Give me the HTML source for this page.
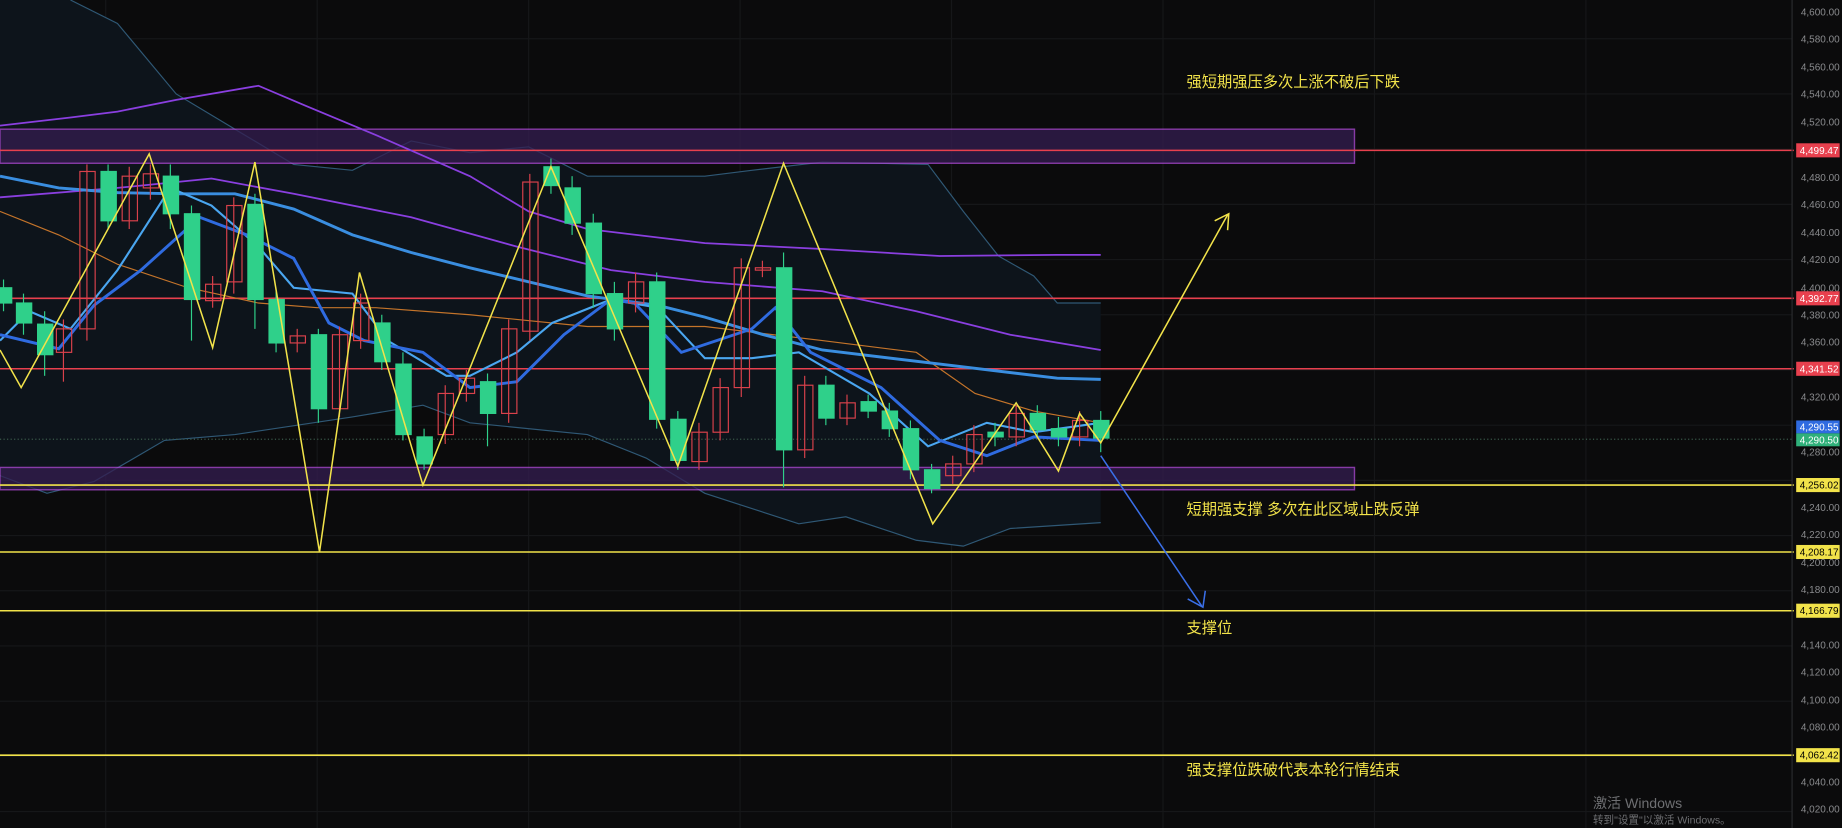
<!DOCTYPE html>
<html><head><meta charset="utf-8"><style>
html,body{margin:0;padding:0;background:#0b0b0c;overflow:hidden}
svg{display:block}
text{font-family:"Liberation Sans","Noto Sans CJK SC",sans-serif}
</style></head><body>
<svg width="1842" height="828" viewBox="0 0 1568 705" preserveAspectRatio="none" xmlns="http://www.w3.org/2000/svg">
<rect width="1568" height="705" fill="#0b0b0c"/>
<g stroke="#161719" stroke-width="1">
<line x1="90" y1="0" x2="90" y2="705"/><line x1="270" y1="0" x2="270" y2="705"/><line x1="450" y1="0" x2="450" y2="705"/><line x1="630" y1="0" x2="630" y2="705"/><line x1="810" y1="0" x2="810" y2="705"/><line x1="990" y1="0" x2="990" y2="705"/><line x1="1170" y1="0" x2="1170" y2="705"/><line x1="1350" y1="0" x2="1350" y2="705"/>
<line x1="0" y1="33" x2="1525" y2="33"/><line x1="0" y1="80" x2="1525" y2="80"/><line x1="0" y1="127" x2="1525" y2="127"/><line x1="0" y1="174" x2="1525" y2="174"/><line x1="0" y1="221" x2="1525" y2="221"/><line x1="0" y1="268" x2="1525" y2="268"/><line x1="0" y1="315" x2="1525" y2="315"/><line x1="0" y1="362" x2="1525" y2="362"/><line x1="0" y1="409" x2="1525" y2="409"/><line x1="0" y1="456" x2="1525" y2="456"/><line x1="0" y1="503" x2="1525" y2="503"/><line x1="0" y1="550" x2="1525" y2="550"/><line x1="0" y1="597" x2="1525" y2="597"/><line x1="0" y1="644" x2="1525" y2="644"/><line x1="0" y1="691" x2="1525" y2="691"/>
</g>
<polygon fill="#0d141b" points="0,0 60,0 100,20 150,80 200,110 250,140 300,145 350,120 400,130 450,125 480,140 500,150 600,150 640,145 700,138 790,140 820,180 850,218 880,235 900,258 937,258 937,445 860,450 820,465 780,460 720,440 680,446 600,420 550,390 500,370 400,360 360,345 300,355 200,370 140,375 80,410 40,420 0,405"/>
<polyline fill="none" stroke="#2f5875" stroke-width="1" points="60,0 100,20 150,80 200,110 250,140 300,145 350,120 400,130 450,125 480,140 500,150 600,150 640,145 700,138 790,140 820,180 850,218 880,235 900,258 937,258"/>
<polyline fill="none" stroke="#2f5875" stroke-width="1" points="0,405 40,420 80,410 140,375 200,370 300,355 360,345 400,360 500,370 550,390 600,420 680,446 720,440 780,460 820,465 860,450 937,445"/>
<rect x="0" y="110" width="1153" height="29" fill="#341d50" opacity="0.75" stroke="#b04ad8" stroke-width="1.2"/>
<rect x="0" y="398" width="1153" height="19" fill="#341d50" opacity="0.75" stroke="#b04ad8" stroke-width="1.2"/>
<g stroke-width="1.3">
<line x1="0" y1="128" x2="1527" y2="128" stroke="#e8404e"/>
<line x1="0" y1="254" x2="1527" y2="254" stroke="#e8404e"/>
<line x1="0" y1="314" x2="1527" y2="314" stroke="#e8404e"/>
<line x1="0" y1="413" x2="1527" y2="413" stroke="#f2e34a"/>
<line x1="0" y1="470" x2="1527" y2="470" stroke="#f2e34a"/>
<line x1="0" y1="520" x2="1527" y2="520" stroke="#f2e34a"/>
<line x1="0" y1="643" x2="1527" y2="643" stroke="#f2e34a"/>
</g>
<line x1="0" y1="374" x2="1525" y2="374" stroke="#3a5a4a" stroke-dasharray="1,2"/>
<polyline fill="none" stroke="#8a3fe0" stroke-width="1.5" points="0,107 60,100 100,95 150,85 220,73 260,90 320,115 400,150 450,180 500,195 600,207 700,212 800,218 900,217 937,217"/>
<polyline fill="none" stroke="#8a3fe0" stroke-width="1.5" points="0,168 100,160 180,152 250,165 350,185 440,210 520,230 600,240 700,248 780,265 860,285 937,298"/>
<polyline fill="none" stroke="#c4742a" stroke-width="1" points="0,180 50,200 100,225 160,245 220,258 270,262 320,262 400,268 500,278 600,278 700,290 780,300 830,335 880,350 937,360"/>
<polyline fill="none" stroke="#3a8ee0" stroke-width="2.5" points="0,150 50,160 100,164 150,165 200,165 250,178 300,200 350,215 400,228 500,252 560,260 600,270 650,285 700,298 800,310 900,322 937,323"/>
<polyline fill="none" stroke="#4aa6f0" stroke-width="1.8" points="0,290 25,265 60,280 100,230 145,160 180,175 220,210 250,245 300,250 330,290 380,320 400,320 440,300 470,275 520,255 560,262 600,305 640,305 680,300 740,335 790,380 840,360 880,368 937,360"/>
<polyline fill="none" stroke="#2f6be0" stroke-width="2.5" points="0,285 50,297 80,260 120,230 170,185 210,200 250,220 280,275 310,290 360,300 400,330 440,325 480,285 520,255 540,258 580,300 640,280 660,262 690,300 750,330 800,375 840,388 880,372 937,375"/>
<g stroke-width="1">
<g stroke="#2fd08a" fill="#2fd08a">
<line x1="3" y1="238" x2="3" y2="265"/><rect x="-3" y="245" width="13" height="13"/>
<line x1="20" y1="250" x2="20" y2="285"/><rect x="14" y="258" width="13" height="17"/>
<line x1="38" y1="265" x2="38" y2="320"/><rect x="32" y="276" width="13" height="26"/>
<line x1="92" y1="140" x2="92" y2="195"/><rect x="86" y="146" width="13" height="42"/>
<line x1="145" y1="140" x2="145" y2="195"/><rect x="139" y="150" width="13" height="32"/>
<line x1="163" y1="175" x2="163" y2="290"/><rect x="157" y="182" width="13" height="73"/>
<line x1="217" y1="165" x2="217" y2="280"/><rect x="211" y="174" width="13" height="81"/>
<line x1="235" y1="248" x2="235" y2="300"/><rect x="229" y="255" width="13" height="37"/>
<line x1="271" y1="280" x2="271" y2="360"/><rect x="265" y="285" width="13" height="63"/>
<line x1="325" y1="268" x2="325" y2="315"/><rect x="319" y="275" width="13" height="33"/>
<line x1="343" y1="300" x2="343" y2="375"/><rect x="337" y="310" width="13" height="60"/>
<line x1="361" y1="365" x2="361" y2="400"/><rect x="355" y="372" width="13" height="23"/>
<line x1="415" y1="318" x2="415" y2="380"/><rect x="409" y="325" width="13" height="27"/>
<line x1="469" y1="135" x2="469" y2="165"/><rect x="463" y="142" width="13" height="16"/>
<line x1="487" y1="150" x2="487" y2="200"/><rect x="481" y="160" width="13" height="30"/>
<line x1="505" y1="182" x2="505" y2="262"/><rect x="499" y="190" width="13" height="60"/>
<line x1="523" y1="240" x2="523" y2="290"/><rect x="517" y="250" width="13" height="30"/>
<line x1="559" y1="232" x2="559" y2="365"/><rect x="553" y="240" width="13" height="117"/>
<line x1="577" y1="350" x2="577" y2="400"/><rect x="571" y="357" width="13" height="35"/>
<line x1="667" y1="215" x2="667" y2="415"/><rect x="661" y="228" width="13" height="155"/>
<line x1="703" y1="320" x2="703" y2="362"/><rect x="697" y="328" width="13" height="28"/>
<line x1="739" y1="336" x2="739" y2="356"/><rect x="733" y="342" width="13" height="8"/>
<line x1="757" y1="343" x2="757" y2="372"/><rect x="751" y="350" width="13" height="15"/>
<line x1="775" y1="358" x2="775" y2="408"/><rect x="769" y="365" width="13" height="35"/>
<line x1="793" y1="395" x2="793" y2="420"/><rect x="787" y="400" width="13" height="16"/>
<line x1="847" y1="360" x2="847" y2="380"/><rect x="841" y="368" width="13" height="4"/>
<line x1="883" y1="345" x2="883" y2="372"/><rect x="877" y="352" width="13" height="14"/>
<line x1="901" y1="355" x2="901" y2="380"/><rect x="895" y="365" width="13" height="7"/>
<line x1="937" y1="350" x2="937" y2="385"/><rect x="931" y="358" width="13" height="15"/>
</g>
<g stroke="#d9414b" fill="none">
<line x1="54" y1="272" x2="54" y2="325"/><rect x="48" y="280" width="13" height="20"/>
<line x1="74" y1="140" x2="74" y2="290"/><rect x="68" y="146" width="13" height="134"/>
<line x1="110" y1="142" x2="110" y2="195"/><rect x="104" y="150" width="13" height="38"/>
<line x1="128" y1="140" x2="128" y2="170"/><rect x="122" y="148" width="13" height="12"/>
<line x1="181" y1="235" x2="181" y2="262"/><rect x="175" y="242" width="13" height="14"/>
<line x1="199" y1="168" x2="199" y2="250"/><rect x="193" y="175" width="13" height="65"/>
<line x1="253" y1="280" x2="253" y2="300"/><rect x="247" y="286" width="13" height="6"/>
<line x1="289" y1="278" x2="289" y2="355"/><rect x="283" y="285" width="13" height="63"/>
<line x1="307" y1="250" x2="307" y2="297"/><rect x="301" y="258" width="13" height="32"/>
<line x1="379" y1="328" x2="379" y2="378"/><rect x="373" y="335" width="13" height="35"/>
<line x1="397" y1="315" x2="397" y2="342"/><rect x="391" y="322" width="13" height="13"/>
<line x1="433" y1="272" x2="433" y2="360"/><rect x="427" y="280" width="13" height="72"/>
<line x1="451" y1="148" x2="451" y2="290"/><rect x="445" y="155" width="13" height="127"/>
<line x1="541" y1="232" x2="541" y2="266"/><rect x="535" y="240" width="13" height="18"/>
<line x1="595" y1="360" x2="595" y2="400"/><rect x="589" y="368" width="13" height="25"/>
<line x1="613" y1="322" x2="613" y2="375"/><rect x="607" y="330" width="13" height="38"/>
<line x1="631" y1="220" x2="631" y2="338"/><rect x="625" y="228" width="13" height="102"/>
<line x1="649" y1="222" x2="649" y2="236"/><rect x="643" y="228" width="13" height="2"/>
<line x1="685" y1="320" x2="685" y2="390"/><rect x="679" y="328" width="13" height="55"/>
<line x1="721" y1="336" x2="721" y2="362"/><rect x="715" y="343" width="13" height="13"/>
<line x1="811" y1="388" x2="811" y2="412"/><rect x="805" y="395" width="13" height="10"/>
<line x1="829" y1="362" x2="829" y2="402"/><rect x="823" y="370" width="13" height="25"/>
<line x1="865" y1="345" x2="865" y2="380"/><rect x="859" y="352" width="13" height="20"/>
<line x1="919" y1="350" x2="919" y2="380"/><rect x="913" y="358" width="13" height="14"/>
</g>
</g>
<polyline fill="none" stroke="#f2e34a" stroke-width="1.3" points="0,298 18,330 127,131 181,296 217,138 272,470 306,232 360,413 469,142 577,397 667,139 794,446 865,343 901,401 919,352 937,377 1045,183"/>
<polyline fill="none" stroke="#f2e34a" stroke-width="1.3" points="1034,188 1046,182 1045,196"/>
<line x1="937" y1="388" x2="1023" y2="516" stroke="#3a6fe8" stroke-width="1.3"/>
<polyline fill="none" stroke="#3a6fe8" stroke-width="1.3" points="1011,510 1024,517 1026,503"/>
<g fill="#f2e34a" font-size="13">
<text x="1010" y="74">强短期强压多次上涨不破后下跌</text>
<text x="1010" y="438">短期强支撑 多次在此区域止跌反弹</text>
<text x="1010" y="539">支撑位</text>
<text x="1010" y="660">强支撑位跌破代表本轮行情结束</text>
</g>
<line x1="1525.5" y1="0" x2="1525.5" y2="705" stroke="#2a2b2e"/>
<g fill="#8a8b8e" font-size="8.5">
<text x="1533" y="13">4,600.00</text><text x="1533" y="36">4,580.00</text><text x="1533" y="60">4,560.00</text><text x="1533" y="83">4,540.00</text><text x="1533" y="107">4,520.00</text><text x="1533" y="154">4,480.00</text><text x="1533" y="177">4,460.00</text><text x="1533" y="201">4,440.00</text><text x="1533" y="224">4,420.00</text><text x="1533" y="248">4,400.00</text><text x="1533" y="271">4,380.00</text><text x="1533" y="294">4,360.00</text><text x="1533" y="318">4,340.00</text><text x="1533" y="341">4,320.00</text><text x="1533" y="388">4,280.00</text><text x="1533" y="435">4,240.00</text><text x="1533" y="458">4,220.00</text><text x="1533" y="482">4,200.00</text><text x="1533" y="505">4,180.00</text><text x="1533" y="552">4,140.00</text><text x="1533" y="575">4,120.00</text><text x="1533" y="599">4,100.00</text><text x="1533" y="622">4,080.00</text><text x="1533" y="669">4,040.00</text><text x="1533" y="692">4,020.00</text>
</g>
<g font-size="8.5">
<rect x="1529" y="122" width="37" height="12" fill="#e8404e"/><text x="1532" y="131" fill="#fff">4,499.47</text>
<rect x="1529" y="248" width="37" height="12" fill="#e8404e"/><text x="1532" y="257" fill="#fff">4,392.77</text>
<rect x="1529" y="308" width="37" height="12" fill="#e8404e"/><text x="1532" y="317" fill="#fff">4,341.52</text>
<rect x="1529" y="358" width="37" height="11" fill="#2f6be0"/><text x="1532" y="366.5" fill="#fff">4,290.55</text>
<rect x="1529" y="369" width="37" height="11" fill="#2fb07a"/><text x="1532" y="377.5" fill="#fff">4,290.50</text>
<rect x="1529" y="407" width="37" height="12" fill="#f2e34a"/><text x="1532" y="416" fill="#000">4,256.02</text>
<rect x="1529" y="464" width="37" height="12" fill="#f2e34a"/><text x="1532" y="473" fill="#000">4,208.17</text>
<rect x="1529" y="514" width="37" height="12" fill="#f2e34a"/><text x="1532" y="523" fill="#000">4,166.79</text>
<rect x="1529" y="637" width="37" height="12" fill="#f2e34a"/><text x="1532" y="646" fill="#000">4,062.42</text>
</g>
<text x="1356" y="688" fill="#6e6f72" font-size="12">激活 Windows</text>
<text x="1356" y="701" fill="#6e6f72" font-size="9">转到"设置"以激活 Windows。</text>
</svg>
</body></html>
